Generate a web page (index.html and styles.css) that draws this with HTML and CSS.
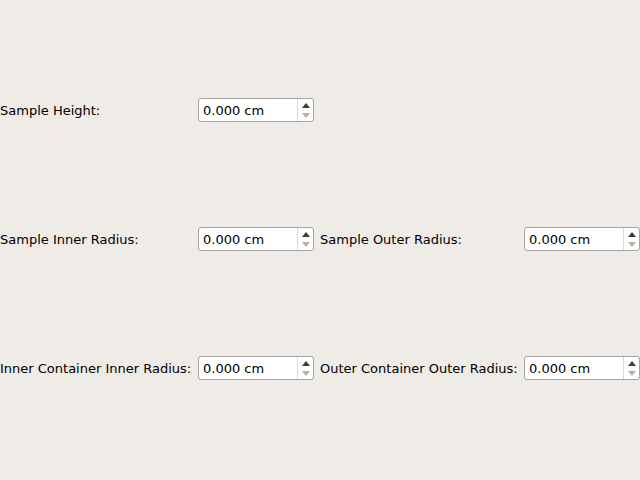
FILE: index.html
```html
<!DOCTYPE html>
<html>
<head>
<meta charset="utf-8">
<link rel="stylesheet" href="styles.css">
</head>
<body>
<div class="form">
  <div class="label">Sample Height:</div>
  <div class="spin"><span class="value">0.000 cm</span><span class="btns"><span class="up"></span><span class="down"></span></span></div>
  <div class="empty"></div>
  <div class="empty"></div>

  <div class="label">Sample Inner Radius:</div>
  <div class="spin"><span class="value">0.000 cm</span><span class="btns"><span class="up"></span><span class="down"></span></span></div>
  <div class="label">Sample Outer Radius:</div>
  <div class="spin"><span class="value">0.000 cm</span><span class="btns"><span class="up"></span><span class="down"></span></span></div>

  <div class="label">Inner Container Inner Radius:</div>
  <div class="spin"><span class="value">0.000 cm</span><span class="btns"><span class="up"></span><span class="down"></span></span></div>
  <div class="label">Outer Container Outer Radius:</div>
  <div class="spin"><span class="value">0.000 cm</span><span class="btns"><span class="up"></span><span class="down"></span></span></div>
</div>
</body>
</html>
```

FILE: styles.css
```css
html, body {
  margin: 0;
  padding: 0;
  background: #efebe7;
  width: 640px;
  height: 480px;
  overflow: hidden;
}
body {
  font-family: "DejaVu Sans", sans-serif;
  font-size: 13px;
  color: #000;
}
.form {
  display: grid;
  grid-template-columns: 192px 116px 198px 116px;
  grid-auto-rows: 24px;
  column-gap: 6px;
  row-gap: 105px;
  padding-top: 98px;
}
.label {
  display: flex;
  align-items: center;
  white-space: nowrap;
}
.spin {
  box-sizing: border-box;
  height: 24px;
  background: #fff;
  border: 1px solid #a6a29d;
  border-radius: 3px;
  display: flex;
  align-items: stretch;
}
.value {
  flex: 1;
  display: flex;
  align-items: center;
  padding-left: 4px;
}
.btns {
  width: 15px;
  border-left: 1px solid #dcd8d4;
  display: flex;
  flex-direction: column;
  align-items: center;
  justify-content: center;
  gap: 5px;
}
.up {
  width: 0;
  height: 0;
  border-left: 4px solid transparent;
  border-right: 4px solid transparent;
  border-bottom: 5px solid #3c3c3c;
}
.down {
  width: 0;
  height: 0;
  border-left: 4px solid transparent;
  border-right: 4px solid transparent;
  border-top: 5px solid #b4b0ac;
}
```
